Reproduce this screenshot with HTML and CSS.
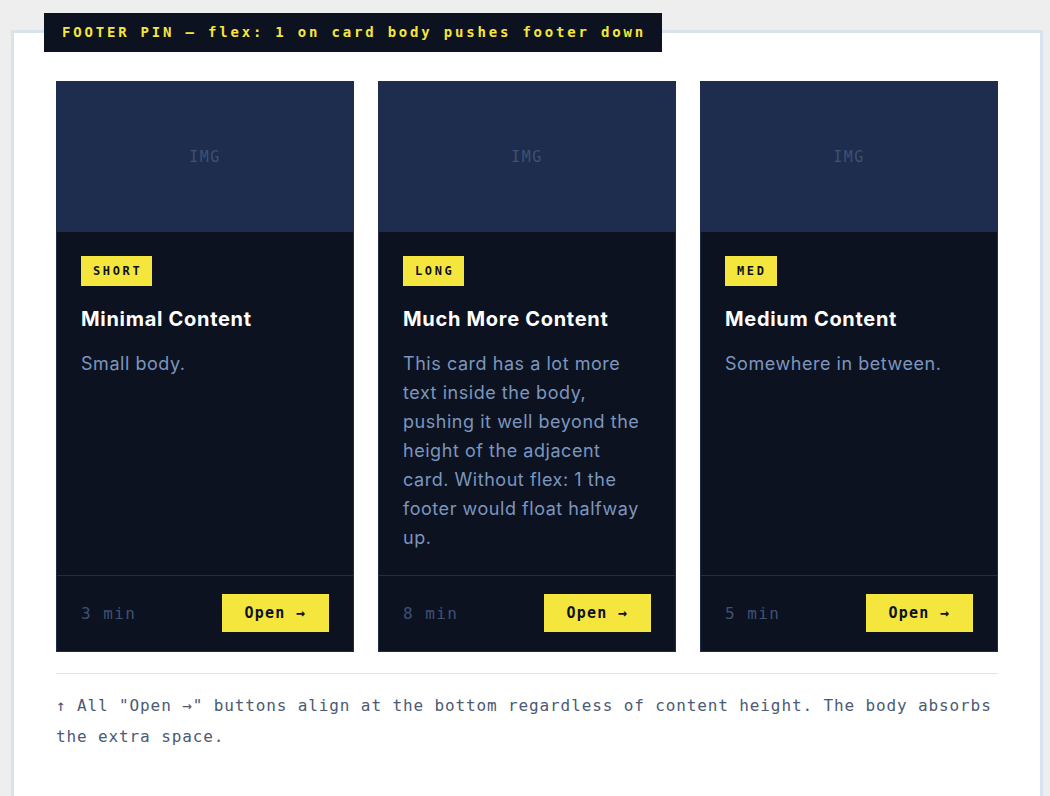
FILE: index.html
```html
<!DOCTYPE html>
<html>
  <head>
    <title>Footer Pin</title>
    <meta charset="UTF-8">
    <meta name="viewport" content="width=device-width, initial-scale=1">
    <link rel="stylesheet" href="styles.css">
  </head>
  <body>
    <div class="panel">
      <div class="panel-label">FOOTER PIN — flex: 1 on card body pushes footer down</div>

      <div class="cards">
        <div class="card">
          <div class="card-img">IMG</div>
          <div class="card-body">
            <span class="tag">SHORT</span>
            <h2 class="card-title">Minimal Content</h2>
            <p class="card-text">Small body.</p>
          </div>
          <div class="card-footer">
            <span class="meta">3 min</span>
            <button class="btn-open">Open →</button>
          </div>
        </div>

        <div class="card">
          <div class="card-img">IMG</div>
          <div class="card-body">
            <span class="tag">LONG</span>
            <h2 class="card-title">Much More Content</h2>
            <p class="card-text">This card has a lot more text inside the body, pushing it well beyond the height of the adjacent card. Without flex: 1 the footer would float halfway up.</p>
          </div>
          <div class="card-footer">
            <span class="meta">8 min</span>
            <button class="btn-open">Open →</button>
          </div>
        </div>

        <div class="card">
          <div class="card-img">IMG</div>
          <div class="card-body">
            <span class="tag">MED</span>
            <h2 class="card-title">Medium Content</h2>
            <p class="card-text">Somewhere in between.</p>
          </div>
          <div class="card-footer">
            <span class="meta">5 min</span>
            <button class="btn-open">Open →</button>
          </div>
        </div>
      </div>

      <p class="note">↑ All "Open →" buttons align at the bottom regardless of content height. The body absorbs the extra space.</p>
    </div>
  </body>
</html>
```

FILE: styles.css
```css
/* footer pin demo */
body {
	margin: 0;
	padding: 30px 7px 0 11px;
	background-color: #eeeeee;
	font-family: Inter, "Open Sans", sans-serif;
}
.panel {
	position: relative;
	background-color: #fff;
	border: 3px solid #d9e3ef;
	padding: 48px 42px 40px 42px;
	min-height: 700px;
}
.panel-label {
	position: absolute;
	top: -20px;
	left: 30px;
	background-color: #0d1220;
	color: #f5e63d;
	font-family: "DejaVu Sans Mono", "Liberation Mono", monospace;
	font-size: 14px;
	font-weight: bold;
	letter-spacing: 0.2em;
	line-height: 19px;
	padding: 10px 16px 10px 18px;
}
.cards {
	display: grid;
	grid-template-columns: repeat(3, 1fr);
	gap: 24px;
}
.card {
	display: flex;
	flex-direction: column;
	background-color: #0d1220;
	border: 1px solid #1e2d4d;
}
.card-img {
	height: 150px;
	background-color: #1e2d4d;
	color: #3d5175;
	font-family: "DejaVu Sans Mono", "Liberation Mono", monospace;
	font-size: 15px;
	letter-spacing: 0.1em;
	display: flex;
	align-items: center;
	justify-content: center;
}
.card-body {
	flex: 1;
	padding: 24px 24px 23px 24px;
}
.tag {
	display: inline-block;
	vertical-align: top;
	background-color: #f5e63d;
	color: #0d1220;
	font-family: "DejaVu Sans Mono", "Liberation Mono", monospace;
	font-size: 12px;
	font-weight: bold;
	letter-spacing: 0.22em;
	line-height: 30px;
	padding: 0 10px 0 12px;
}
.card-title {
	margin: 19px 0 16px 0;
	color: #fff;
	font-size: 20px;
	font-weight: 700;
	line-height: 28px;
	letter-spacing: 0.035em;
}
.card-text {
	margin: 0;
	color: #7b96bf;
	font-size: 18px;
	line-height: 29px;
	letter-spacing: 0.03em;
}
.card-footer {
	display: flex;
	align-items: center;
	justify-content: space-between;
	border-top: 1px solid #1e2d4d;
	padding: 18px 24px 19px 24px;
}
.meta {
	color: #3d5175;
	font-family: "DejaVu Sans Mono", "Liberation Mono", monospace;
	font-size: 16px;
	letter-spacing: 0.09em;
}
.btn-open {
	background-color: #f5e63d;
	color: #0d1220;
	border: none;
	border-radius: 0;
	height: 38px;
	padding: 0 23px 0 23px;
	font-family: "DejaVu Sans Mono", "Liberation Mono", monospace;
	font-size: 15px;
	font-weight: bold;
	letter-spacing: 0.08em;
	cursor: pointer;
}
.note {
	margin: 21px 0 0 0;
	padding-top: 16px;
	border-top: 1px solid #dfe5ec;
	color: #4b5a75;
	font-family: "DejaVu Sans Mono", "Liberation Mono", monospace;
	font-size: 16px;
	letter-spacing: 0.055em;
	line-height: 31px;
}
```
